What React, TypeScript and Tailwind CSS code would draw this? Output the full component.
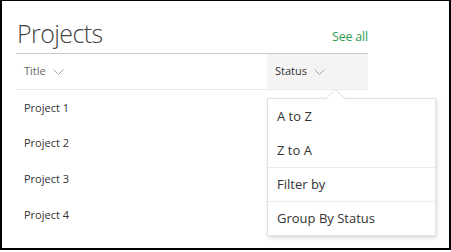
import React from "react";

function Chevron({ className = "" }: { className?: string }) {
  return (
    <svg width="11" height="6" viewBox="0 0 11 6" className={className} fill="none">
      <path d="M0.5 0.5 L5.5 5.5 L10.5 0.5" stroke="#a6a6a6" strokeWidth="1" />
    </svg>
  );
}

export default function App() {
  const rows = ["Project 1", "Project 2", "Project 3", "Project 4"];
  const rowH = ["h-[36px]", "h-[35px]", "h-[36px]", "h-[36px]"];
  return (
    <div
      className="relative w-[451px] h-[252px] bg-white"
      style={{ fontFamily: '"Open Sans", "Noto Sans", sans-serif' }}
    >
      <div className="w-[451px] h-[250px] border-l-2 border-t border-r-2 border-b-2 border-black pl-[14px]">
        <div className="w-[352px] h-[53px] flex items-end justify-between border-b border-[#c8c8c8] pb-[7px]">
          <div className="text-[25px] font-light leading-none text-[#444] tracking-[-0.6px] pl-[1px]">Projects</div>
          <div className="text-[12.5px] leading-none text-[#2f9e55] pb-[3px] tracking-[-0.2px]">See all</div>
        </div>
        <div className="w-[352px] grid grid-cols-[251px_1fr] h-[36px] border-b border-[#eaeaea]">
          <div className="flex items-center pl-[8px] text-[11px] text-[#666] gap-[7px]">
            <span>Title</span>
            <Chevron />
          </div>
          <div className="flex items-center pl-[8px] text-[11px] text-[#333] bg-[#f4f4f4] gap-[7px]">
            <span>Status</span>
            <Chevron />
          </div>
        </div>
        {rows.map((r, i) => (
          <div key={r} className={`w-[352px] flex items-center pl-[8px] text-[11px] text-[#333] ${rowH[i]}`}>
            {r}
          </div>
        ))}
      </div>

      <div className="absolute left-[267px] top-[98px] w-[169px] h-[138px] bg-white border border-[#e3e3e3] shadow-[1px_2px_4px_rgba(0,0,0,0.15)]">
        <svg
          className="absolute left-[57px] top-[-10px]"
          width="21"
          height="11"
          viewBox="0 0 21 11"
        >
          <path d="M0 10.5 L10.5 0.5 L21 10.5 Z" fill="white" />
          <path d="M0 10.5 L10.5 0.5 L21 10.5" fill="none" stroke="#dcdcdc" strokeWidth="1" />
        </svg>
        <div className="h-[35px] flex items-center pl-[9px] text-[13px] text-[#333]">A to Z</div>
        <div className="h-[33px] flex items-center pl-[9px] text-[13px] text-[#333]">Z to A</div>
        <div className="h-[34px] flex items-center pl-[9px] text-[13px] text-[#333] border-t border-[#ececec]">Filter by</div>
        <div className="h-[34px] flex items-center pl-[9px] text-[13px] text-[#333] border-t border-[#ececec]">Group By Status</div>
      </div>
    </div>
  );
}
